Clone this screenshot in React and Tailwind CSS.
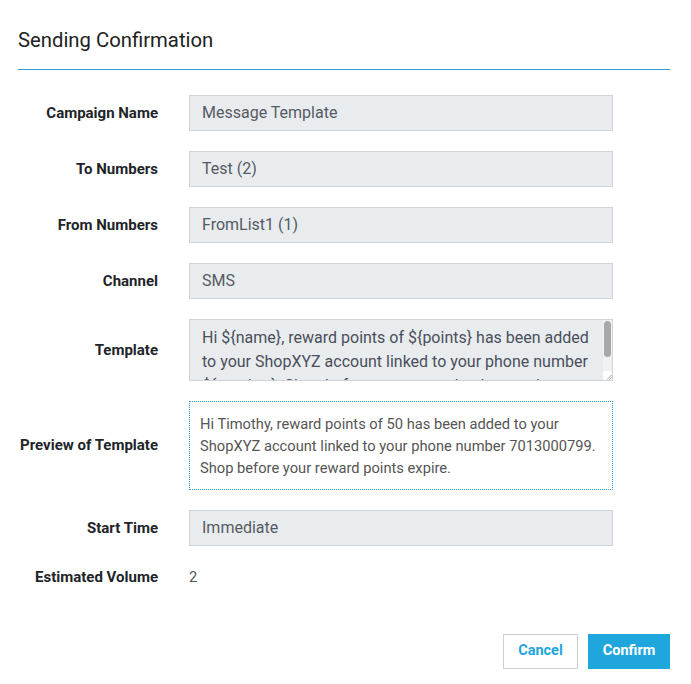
import React from 'react';

const fieldClass =
  "w-[424px] h-[36px] px-3 flex items-center bg-[#e9ecef] border border-[#ced4da] text-[16px] text-[#555b62]";

const Row = ({ label, children }) => (
  <>
    <div className="text-right text-[15px] font-bold text-[#212529] self-center">
      {label}
    </div>
    <div className="self-center">{children}</div>
  </>
);

// read-only template box with a classic scrollbar and resize grip
const TemplateBox = ({ text }) => (
  <div className="flex w-[424px] h-[62px] bg-[#e9ecef] border border-[#ced4da]">
    <div className="flex-1 overflow-hidden pl-3 pr-2 pt-[6px] text-[16px] leading-[24px] text-[#4a4f5a]">
      {text}
    </div>
    <div className="w-[9px] flex flex-col bg-[#f1f1f1]">
      <div className="mt-[1px] h-[36px] mx-[1px] rounded-[4px] bg-[#a8a8a8]" />
      <div className="flex-1" />
      <div className="h-[9px] bg-white flex items-end justify-end">
        <svg width="6" height="6" viewBox="0 0 6 6">
          <path d="M5.5 1 L1 5.5 M5.5 3.5 L3.5 5.5" stroke="#888" strokeWidth="0.8" />
        </svg>
      </div>
    </div>
  </div>
);

const SendingConfirmation = () => {
  const template =
    "Hi ${name}, reward points of ${points} has been added to your ShopXYZ account linked to your phone number ${number}. Shop before your reward points expire.";

  return (
    <div
      className="w-[691px] h-[684px] bg-white pl-[18px] pr-[21px] pt-[26px]"
      style={{ fontFamily: "Roboto, 'Liberation Sans', sans-serif" }}
    >
      <h1 className="text-[20.3px] leading-[28px] text-[#222] font-normal">
        Sending Confirmation
      </h1>
      <div className="mt-[15px] h-px bg-[#2f9bd2]" />

      <div className="mt-[25px] grid grid-cols-[140px_424px] gap-x-[31px] gap-y-[20px]">
        <Row label="Campaign Name">
          <div className={fieldClass}>Message Template</div>
        </Row>
        <Row label="To Numbers">
          <div className={fieldClass}>Test (2)</div>
        </Row>
        <Row label="From Numbers">
          <div className={fieldClass}>FromList1 (1)</div>
        </Row>
        <Row label="Channel">
          <div className={fieldClass}>SMS</div>
        </Row>
        <Row label="Template">
          <TemplateBox text={template} />
        </Row>
        <Row label="Preview of Template">
          <div className="w-[424px] h-[89px] px-[10px] pt-[11px] border border-dotted border-[#2a9fd6] text-[14.7px] leading-[22px] text-[#555]">
            Hi Timothy, reward points of 50 has been added to your ShopXYZ account linked to your phone number 7013000799.
            Shop before your reward points expire.
          </div>
        </Row>
        <Row label="Start Time">
          <div className={fieldClass}>Immediate</div>
        </Row>
        <Row label="Estimated Volume">
          <div className="h-[22px] leading-[22px] text-[14.7px] text-[#555]">2</div>
        </Row>
      </div>

      <div className="mt-[45px] flex justify-end gap-[10px]">
        <button className="w-[75px] h-[35px] border border-[#d0d0d0] bg-white text-[#1fa5dc] text-[14.5px] font-bold">
          Cancel
        </button>
        <button className="w-[82px] h-[35px] bg-[#1fa6dd] text-white text-[14.5px] font-bold">
          Confirm
        </button>
      </div>
    </div>
  );
};

export default function App() {
  return <SendingConfirmation />;
}
